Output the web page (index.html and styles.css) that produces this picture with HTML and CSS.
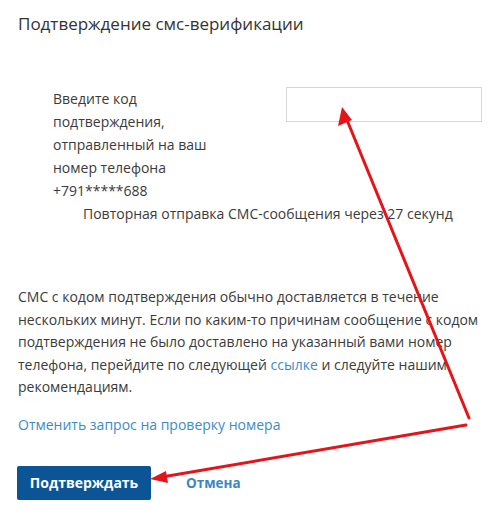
FILE: index.html
```html
<!DOCTYPE html>
<html lang="ru">
<head>
<meta charset="utf-8">
<link rel="stylesheet" href="styles.css">
</head>
<body>
<div class="page">
  <h1 class="title">Подтверждение смс-верификации</h1>
  <div class="code-row">
    <div class="code-label">Введите код подтверждения, отправленный на ваш номер телефона +791*****688</div>
    <div class="code-input"></div>
  </div>
  <div class="resend">Повторная отправка СМС-сообщения через 27 секунд</div>
  <p class="info">СМС с кодом подтверждения обычно доставляется в течение нескольких минут. Если по каким-то причинам сообщение с кодом подтверждения не было доставлено на указанный вами номер телефона, перейдите по следующей <a class="link">ссылке</a> и следуйте нашим рекомендациям.</p>
  <a class="link cancel-req">Отменить запрос на проверку номера</a>
  <div class="actions">
    <button class="btn">Подтверждать</button>
    <a class="link cancel">Отмена</a>
  </div>
  <svg class="arrows" width="500" height="523" viewBox="0 0 500 523">
    <line x1="469" y1="418" x2="347" y2="120" stroke="#e3151a" stroke-width="3" stroke-linecap="round"/>
    <polygon points="342,107 338,126 352,120" fill="#e3151a"/>
    <line x1="466" y1="425" x2="162" y2="477" stroke="#e3151a" stroke-width="3" stroke-linecap="round"/>
    <polygon points="150,479 166,471 168,483" fill="#e3151a"/>
  </svg>
</div>
</body>
</html>
```
FILE: styles.css
```css
html, body {
  margin: 0;
  padding: 0;
  background: #fff;
}
.page {
  position: relative;
  width: 500px;
  height: 523px;
  padding: 0 18px;
  box-sizing: border-box;
  font-family: "Open Sans", "Noto Sans", sans-serif;
  color: #3b3b3b;
}
.title {
  margin: 0;
  padding-top: 12px;
  font-size: 17px;
  font-weight: 400;
  line-height: 24px;
  color: #333;
}
.code-row {
  display: flex;
  margin-top: 51px;
  padding-left: 35px;
}
.code-label {
  width: 165px;
  font-size: 14px;
  line-height: 23px;
}
.code-input {
  margin-left: 68px;
  width: 195px;
  height: 33px;
  border: 1px solid #d6d6d6;
}
.resend {
  margin-top: 0;
  padding-left: 65px;
  font-size: 14px;
  line-height: 23px;
}
.info {
  margin: 61px 0 0 0;
  font-size: 14px;
  line-height: 22.6px;
}
.link {
  color: #3d8bc4;
}
.cancel-req {
  display: block;
  margin-top: 14px;
  font-size: 14px;
  line-height: 23px;
}
.actions {
  display: flex;
  align-items: center;
  margin-top: 30px;
}
.btn {
  width: 134px;
  height: 34px;
  margin-left: -1px;
  border: none;
  border-radius: 2px;
  background: #0b5596;
  color: #fff;
  font-family: "Open Sans", "Noto Sans", sans-serif;
  font-size: 14px;
  font-weight: 700;
  padding: 0;
}
.cancel {
  margin-left: 35px;
  font-size: 13.5px;
  font-weight: 700;
  color: #3d85bf;
}
.arrows {
  position: absolute;
  left: 0;
  top: 0;
  pointer-events: none;
}
```
